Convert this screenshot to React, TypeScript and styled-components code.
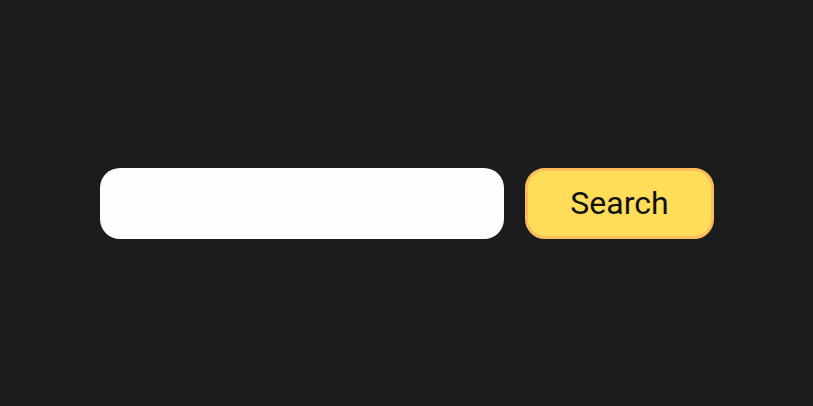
import styled, { createGlobalStyle } from 'styled-components';

const GlobalStyle = createGlobalStyle`
	html, body {
		margin: 0;
		padding: 0;
		background: #1c1c1c;
	}
	* {
		box-sizing: border-box;
	}
`;

const Page = styled.div`
	width: 100%;
	height: 406px;
	display: flex;
	align-items: center;
	justify-content: center;
	background: #1c1c1c;
`;

const SearchForm = styled.form`
	display: flex;
	align-items: center;
	gap: 21px;
	margin-left: 1px;
`;

const SearchInput = styled.input`
	width: 404px;
	height: 71px;
	border: none;
	outline: none;
	border-radius: 20px;
	background: #fefefe;
	padding: 0 20px;
	font-family: Roboto, 'Liberation Sans', sans-serif;
	font-size: 28px;
	color: #111;
`;

const SearchButton = styled.button`
	width: 189px;
	height: 71px;
	border: 3px solid #fcbd5c;
	border-radius: 20px;
	background: #ffdd59;
	color: #111;
	font-family: Roboto, 'Liberation Sans', sans-serif;
	font-size: 32px;
	font-weight: 400;
	cursor: pointer;
	padding: 0;
`;

const App = () => {
	return (
		<>
			<GlobalStyle />
			<Page>
				<SearchForm onSubmit={(e) => e.preventDefault()}>
					<SearchInput type="text" aria-label="Search" />
					<SearchButton type="submit">Search</SearchButton>
				</SearchForm>
			</Page>
		</>
	);
};

export default App;
